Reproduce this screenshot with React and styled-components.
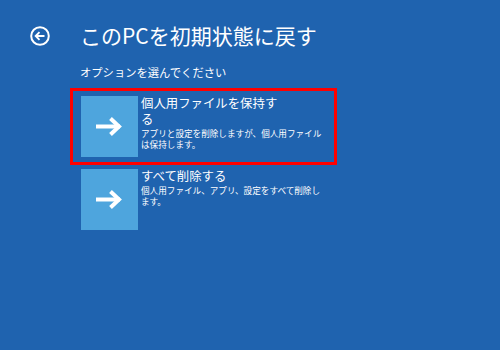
import React from "react";
import styled, { createGlobalStyle } from "styled-components";

const Global = createGlobalStyle`
  html, body { margin: 0; padding: 0; }
  body {
    background: #1f63af;
    width: 500px;
    height: 350px;
    overflow: hidden;
    font-family: "Noto Sans CJK JP", "Noto Sans", sans-serif;
    color: #ffffff;
  }
`;

const Page = styled.div`
  width: 500px;
  height: 350px;
  background: #1f63af;
  box-sizing: border-box;
  padding: 23px 0 0 30px;
`;

const Header = styled.div`
  display: flex;
  align-items: center;
  gap: 30px;
  height: 24px;
`;

const BackButton = styled.div`
  width: 20px;
  height: 20px;
  margin-top: 1px;
  display: flex;
`;

const Title = styled.h1`
  margin: 0;
  font-size: 21px;
  line-height: 24px;
  font-weight: 400;
  white-space: nowrap;
`;

const Body = styled.div`
  padding-left: 50px;
`;

const Subtitle = styled.div`
  margin-top: 18px;
  font-size: 11.3px;
  line-height: 14px;
`;

const OptionList = styled.div`
  margin-top: 12px;
  margin-left: -7px;
  display: flex;
  flex-direction: column;
  gap: 2px;
  width: 261px;
`;

const Option = styled.div`
  display: flex;
  gap: 3px;
  padding: 5px 8px;
  outline: ${(p) => (p.$selected ? "3px solid #ff0000" : "none")};
`;

const Tile = styled.div`
  flex: 0 0 57px;
  height: 61px;
  background: #4ea5dd;
  display: flex;
  align-items: center;
  justify-content: center;
`;

const TextCol = styled.div`
  display: flex;
  flex-direction: column;
  margin-top: -1.5px;
  width: 185px;
`;

const OptionTitle = styled.div`
  font-size: 12.4px;
  line-height: 16px;
  max-width: 142px;
`;

const OptionDesc = styled.div`
  font-size: 8.6px;
  line-height: 11px;
  margin-top: 1px;
  max-width: 182px;
`;

const BackIcon = () => (
  <svg width="20" height="20" viewBox="0 0 20 20">
    <circle cx="10" cy="10" r="8.8" fill="none" stroke="#fff" strokeWidth="2" />
    <path d="M14.5 10H6M9.5 6.2L5.7 10l3.8 3.8" fill="none" stroke="#fff" strokeWidth="1.9" />
  </svg>
);

const ArrowIcon = () => (
  <svg width="27" height="19" viewBox="0 0 27 19">
    <path d="M0 9.5H24" stroke="#fff" strokeWidth="4" />
    <path d="M14.5 1.5L23 9.5L14.5 17.5" fill="none" stroke="#fff" strokeWidth="4" strokeLinejoin="miter" />
  </svg>
);

const options = [
  {
    title: "個人用ファイルを保持する",
    desc: "アプリと設定を削除しますが、個人用ファイルは保持します。",
    selected: true,
  },
  {
    title: "すべて削除する",
    desc: "個人用ファイル、アプリ、設定をすべて削除します。",
    selected: false,
  },
];

export default function App() {
  return (
    <>
      <Global />
      <Page>
        <Header>
          <BackButton>
            <BackIcon />
          </BackButton>
          <Title>このPCを初期状態に戻す</Title>
        </Header>
        <Body>
          <Subtitle>オプションを選んでください</Subtitle>
          <OptionList>
            {options.map((o) => (
              <Option key={o.title} $selected={o.selected}>
                <Tile>
                  <ArrowIcon />
                </Tile>
                <TextCol>
                  <OptionTitle>{o.title}</OptionTitle>
                  <OptionDesc>{o.desc}</OptionDesc>
                </TextCol>
              </Option>
            ))}
          </OptionList>
        </Body>
      </Page>
    </>
  );
}
